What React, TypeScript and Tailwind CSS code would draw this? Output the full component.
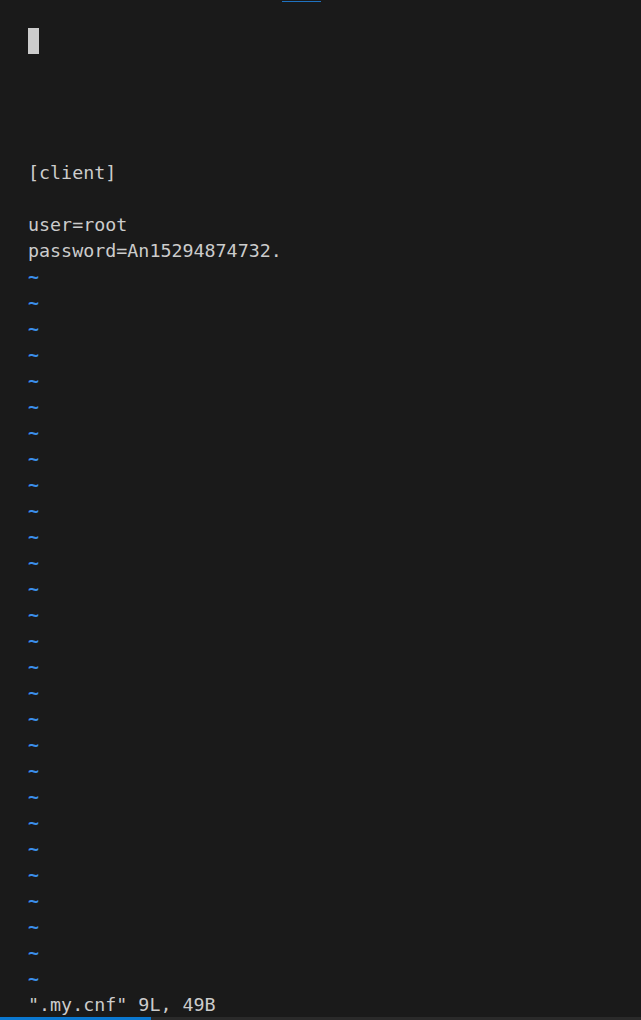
const mono = 'font-["DejaVu_Sans_Mono","Liberation_Mono",monospace]'

const lines: string[] = ['', '', '', '', '', '[client]', '', 'user=root', 'password=An15294874732.']
const tildes = Array.from({ length: 28 }, (_, i) => i)

function Line({ children }: { children?: React.ReactNode }) {
  return <div className="h-[26px] whitespace-pre pt-[2px] leading-[26px]">{children}</div>
}

export default function App() {
  return (
    <div className={`flex h-[1020px] w-[641px] flex-col overflow-hidden bg-[#1a1a1a] text-[18.33px] text-[#cccccc] ${mono}`}>
      <div className="h-[28px] pt-px">
        <div className="ml-[282px] h-px w-[39px] bg-[#1f72c0]" />
      </div>

      <div className="flex flex-col pl-[28px]">
        <div className="h-[26px] w-[11px] bg-[#cccccc]" />
        {lines.slice(1).map((text, i) => (
          <Line key={i}>{text}</Line>
        ))}
        {tildes.map((i) => (
          <Line key={`t${i}`}>
            <span className="font-bold text-[#3b8eea]">~</span>
          </Line>
        ))}
        <Line>".my.cnf" 9L, 49B</Line>
      </div>

      <div className="mt-auto flex h-[3px] w-full bg-[#2a2a2a]">
        <div className="h-full w-[151px] bg-[#0b78d0]" />
      </div>
    </div>
  )
}
